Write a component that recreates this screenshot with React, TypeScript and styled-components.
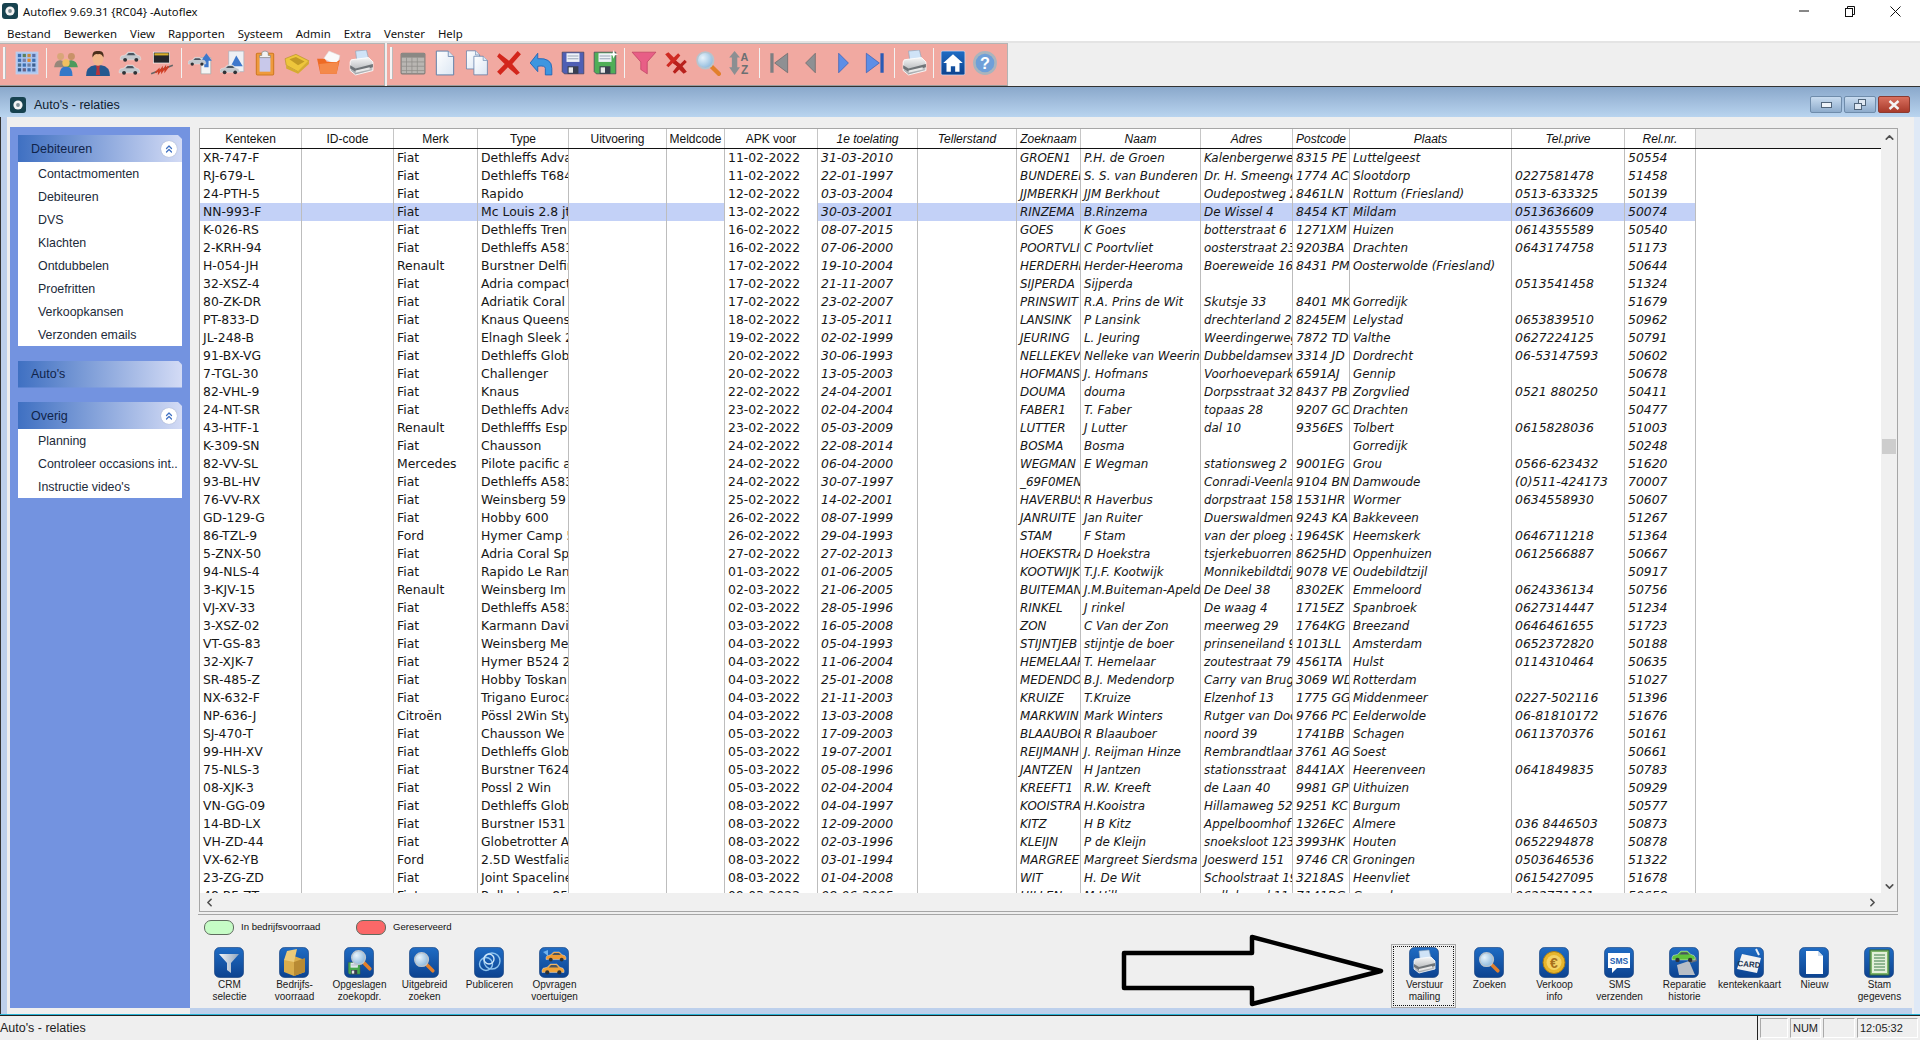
import React from 'react';
import styled, { createGlobalStyle } from 'styled-components';
import { ChevronUp, ChevronDown, ChevronLeft, ChevronRight, ChevronsUp } from 'lucide-react';

const GlobalStyle = createGlobalStyle`
  html, body { margin: 0; padding: 0; overflow: hidden; background: #efefef; }
  * { box-sizing: border-box; }
`;

const Page = styled.div`
  width: 1920px;
  height: 1040px;
  display: flex;
  flex-direction: column;
  overflow: hidden;
  font-family: "Liberation Sans", Arial, sans-serif;
  color: #111;
`;

const HiddenDefs = styled.svg`
  position: absolute;
  width: 0;
  height: 0;
`;

/* window chrome */
const TitleBar = styled.div`
  height: 22px;
  flex: none;
  background: #fff;
  display: flex;
  align-items: center;
  padding: 0 0 0 2px;
`;
const TitleText = styled.div`
  margin-left: 5px;
  font: 11.3px "Noto Sans", sans-serif;
  white-space: nowrap;
`;
const WinButtons = styled.div`
  margin-left: auto;
  margin-right: 2px;
  display: flex;
`;
const WinButton = styled.div`
  width: 45.5px;
  height: 20px;
  display: flex;
  align-items: center;
  justify-content: center;
`;
const MenuBar = styled.div`
  height: 19px;
  flex: none;
  background: #fff;
  display: flex;
  align-items: center;
  gap: 13px;
  padding: 3px 0 0 7px;
  font: 11.4px "Noto Sans", sans-serif;
`;
const ToolbarRow = styled.div`
  height: 46px;
  flex: none;
  display: flex;
  background: #efefef;
  border-top: 2px solid #e4e4e4;
  border-bottom: 1px solid #333;
`;
const ToolBand = styled.div<{ $w: number; $pad: number }>`
  width: ${p => p.$w}px;
  padding-left: ${p => p.$pad}px;
  padding-bottom: 4px;
  margin-right: 2px;
  height: 43px;
  display: flex;
  align-items: center;
  background: #f1a9a1;
  border-top: 1px solid #b4b4b4;
  border-bottom: 1px solid #9a9a9a;
  border-right: 1px solid #b4b4b4;
`;
const Grip = styled.div<{ $mr: number }>`
  width: 3px;
  height: 32px;
  margin-right: ${p => p.$mr}px;
  background: #f4f4f4;
  border-right: 1px solid #bbb;
`;
const ToolSep = styled.div`
  width: 1px;
  height: 30px;
  margin: 0 3px;
  background: #f2f2f2;
`;
const ToolBtn = styled.div`
  width: 32px;
  height: 32px;
  flex: none;
  display: flex;
  align-items: center;
  justify-content: center;
`;

/* mdi child */
const MdiTitle = styled.div`
  height: 30px;
  flex: none;
  display: flex;
  align-items: flex-end;
  padding: 0 10px 4px 10px;
  background: linear-gradient(#8aa8cb, #b9d4ef);
`;
const MdiTitleText = styled.div`
  margin: 0 0 0 8px;
  font-size: 12.5px;
  line-height: 15px;
  color: #10202e;
`;
const MdiButtons = styled.div`
  margin-left: auto;
  display: flex;
  gap: 2px;
`;
const MdiButton = styled.div<{ $close?: boolean }>`
  width: 32px;
  height: 17px;
  display: flex;
  align-items: center;
  justify-content: center;
  border: 1px solid ${p => (p.$close ? '#8c3a30' : '#6f8cab')};
  border-radius: 2px;
  background: ${p =>
    p.$close ? 'linear-gradient(#d9705f, #a83a2a)' : 'linear-gradient(#c9dcf0, #8eaccc)'};
`;
const Body = styled.div`
  flex: 1;
  min-height: 0;
  display: flex;
  background: #efefef;
`;
const LeftFrame = styled.div`
  width: 10px;
  flex: none;
  border-left: 1px solid #333;
  background: linear-gradient(90deg, #bdd0ec 70%, #efefef 70%);
`;
const RightFrame = styled.div`
  width: 8px;
  flex: none;
  background: linear-gradient(90deg, #efefef 20%, #dfe9f6 20%);
`;

/* sidebar */
const Sidebar = styled.div`
  width: 180px;
  flex: none;
  margin-top: 10px;
  margin-bottom: 6px;
  background: #7393e0;
  padding: 8px 8px 0;
  display: flex;
  flex-direction: column;
`;
const Group = styled.div`
  margin-bottom: 14.5px;
`;
const GroupHead = styled.div`
  height: 27px;
  display: flex;
  align-items: center;
  justify-content: space-between;
  padding: 0 5px 0 13px;
  font-size: 12.5px;
  color: #10244a;
  background: linear-gradient(90deg, #3f70c2, #d3dbf5);
  clip-path: polygon(0 0, calc(100% - 4px) 0, 100% 4px, 100% 100%, 0 100%);
`;
const Collapse = styled.div`
  width: 16px;
  height: 16px;
  border-radius: 50%;
  background: #fff;
  box-shadow: 0 0 1px #8593b0;
  display: flex;
  align-items: center;
  justify-content: center;
  color: #3f70c2;
`;
const GroupItem = styled.div`
  height: 23px;
  line-height: 25px;
  padding-left: 20px;
  background: #fff;
  font-size: 12.4px;
  color: #1c2a3a;
  white-space: nowrap;
  overflow: hidden;
`;

/* main */
const Main = styled.div`
  flex: 1;
  min-width: 0;
  display: flex;
  flex-direction: column;
  padding-left: 6px;
`;
const GridFrame = styled.div`
  width: 1699px;
  height: 784px;
  flex: none;
  margin: 11px 0 0 3px;
  border: 1px solid #a6a6a6;
  display: flex;
  background: #fff;
`;
const GridInner = styled.div`
  flex: 1;
  min-width: 0;
  display: flex;
  flex-direction: column;
`;
const HeadRow = styled.div`
  height: 20px;
  flex: none;
  display: flex;
  border-bottom: 1px solid #111;
`;
const HeadCell = styled.div<{ $w: number; $it?: boolean }>`
  width: ${p => p.$w}px;
  flex: none;
  text-align: center;
  font-size: 12px;
  line-height: 20px;
  font-style: ${p => (p.$it ? 'italic' : 'normal')};
  background: #fff;
  border-right: 1px solid #c6c6c6;
  white-space: nowrap;
  overflow: hidden;
`;
const HeadRest = styled.div`
  flex: 1;
  background: #efefef;
`;
const RowsArea = styled.div`
  flex: 1;
  min-height: 0;
  overflow: hidden;
`;
const Row = styled.div`
  height: 18px;
  display: flex;
`;
const Cell = styled.div<{ $w: number; $it?: boolean; $fs?: number; $hl?: boolean }>`
  width: ${p => p.$w}px;
  flex: none;
  padding-left: 3px;
  font-family: "DejaVu Sans", sans-serif;
  font-size: ${p => p.$fs ?? 12.4}px;
  line-height: 18px;
  font-style: ${p => (p.$it ? 'italic' : 'normal')};
  background: ${p => (p.$hl ? '#c3d1f7' : '#fff')};
  border-right: 1px solid #bdbdbd;
  white-space: nowrap;
  overflow: hidden;
  color: #161616;
`;
const HScroll = styled.div`
  height: 18px;
  flex: none;
  background: #f0f0f0;
  display: flex;
  align-items: center;
  justify-content: space-between;
  padding: 0 2px 0 3px;
  color: #505050;
`;
const VScroll = styled.div`
  width: 16px;
  flex: none;
  padding: 2px 0 0;
  background: #f0f0f0;
  display: flex;
  flex-direction: column;
  align-items: center;
  color: #505050;
`;
const VThumb = styled.div`
  width: 14px;
  height: 15px;
  margin-top: 295px;
  background: #cdcdcd;
`;
const VDown = styled.div`
  margin-top: auto;
  padding-bottom: 18px;
  display: flex;
`;
const BottomLine = styled.div`
  width: 1700px;
  flex: none;
  margin: 2px 0 0 2px;
  border-top: 1px solid #a6a6a6;
`;
const Legend = styled.div`
  height: 29px;
  flex: none;
  display: flex;
  align-items: flex-start;
  padding: 5px 0 0 8px;
`;
const LegendPill = styled.div<{ $c: string }>`
  width: 30px;
  height: 15px;
  flex: none;
  border: 1px solid #5f6b5f;
  border-radius: 7px;
  background: ${p => p.$c};
`;
const LegendText = styled.div<{ $mr?: number }>`
  width: ${p => p.$mr ?? 'auto'}px;
  margin-left: 7px;
  font-size: 9.6px;
  line-height: 14px;
  white-space: nowrap;
`;
const ActionRow = styled.div`
  position: relative;
  height: 64px;
  flex: none;
  margin-right: 1px;
  display: flex;
  justify-content: space-between;
`;
const ActionGroup = styled.div`
  display: flex;
`;
const ActionBtn = styled.div<{ $focus?: boolean }>`
  width: 65px;
  height: 64px;
  display: flex;
  flex-direction: column;
  align-items: center;
  padding-top: 2px;
  font-size: 10px;
  line-height: 12px;
  text-align: center;
  color: #1a1a1a;
  border: 1px solid ${p => (p.$focus ? '#a8a8a8' : 'transparent')};
  outline: ${p => (p.$focus ? '1px dotted #111' : 'none')};
  outline-offset: -3px;
`;
const ActionLabel = styled.div`
  margin-top: 1px;
  padding-left: 2px;
  white-space: pre-line;
`;
const CalloutArrow = styled.svg`
  position: absolute;
  right: 525px;
  top: -10px;
`;
const BottomBand = styled.div`
  height: 6px;
  flex: none;
  margin-left: -6px;
  background: #bdd0ec;
`;
const WindowEdge = styled.div`
  height: 2px;
  flex: none;
  background: #2ab4d6;
  border-bottom: 1px solid #222;
`;
const StatusBar = styled.div`
  height: 24px;
  flex: none;
  display: flex;
  align-items: center;
  background: #efefef;
  font-size: 12.5px;
  color: #222;
`;
const StatusPanels = styled.div`
  margin-left: auto;
  align-self: stretch;
  display: flex;
  align-items: center;
  gap: 2px;
  padding: 0 2px;
  border-left: 1px solid #222;
`;
const StatusPanel = styled.div<{ $w: number; $left?: boolean }>`
  width: ${p => p.$w}px;
  height: 20px;
  line-height: 18px;
  padding-left: ${p => (p.$left ? 2 : 0)}px;
  text-align: ${p => (p.$left ? 'left' : 'center')};
  border: 1px solid;
  border-color: #a9a9a9 #fff #fff #a9a9a9;
  font-size: 11px;
`;

/* drawings */
const Svg = ({ children, w = 26, h = 26 }: { children: React.ReactNode; w?: number; h?: number }) => (
  <svg width={w} height={h} viewBox="0 0 24 24">{children}</svg>
);

const AppLogo = () => (
  <svg width="16" height="16" viewBox="0 0 16 16">
    <rect width="16" height="16" rx="3" fill="#17424f" />
    <circle cx="8" cy="8" r="4.6" fill="#f4f4f4" />
    <circle cx="8" cy="8" r="1.9" fill="#7d8f96" />
  </svg>
);

const CarShape = ({ x = 0, y = 0, s = 1, c = '#c3c8cd' }: { x?: number; y?: number; s?: number; c?: string }) => (
  <g transform={`translate(${x} ${y}) scale(${s})`}>
    <path d="M0 7 L1 5 L5 4 L8 1 H14 L17 4 L20 5 L21 7 V9 H0Z" fill={c} stroke="#f4f4f4" strokeWidth=".4" />
    <path d="M6.5 4.2 L8.6 2 H13.6 L15.6 4.2Z" fill="#4a5560" />
    <circle cx="5" cy="9" r="2" fill="#2e3236" />
    <circle cx="16.5" cy="9" r="2" fill="#2e3236" />
  </g>
);

const Printer = () => (
  <>
    <path d="M7 1 L17 0 L19 8 L8 9Z" fill="#cfe3f7" stroke="#8fa3b6" strokeWidth=".6" />
    <path d="M3 9 L19 7 L23 11 V19 L7 23 L2 19 V11Z" fill="url(#grey)" stroke="#fff" strokeWidth=".8" />
    <path d="M2 14 L7 17 L23 13 V16 L7 20 L2 17Z" fill="#6f7478" />
    <path d="M7 19 L20 16 V18 L7 21Z" fill="#e8e8e8" />
  </>
);

const Magnifier = () => (
  <>
    <path d="M14 14 L22 22" stroke="#e2802c" strokeWidth="4" strokeLinecap="round" />
    <circle cx="9.5" cy="9.5" r="7.6" fill="url(#lens)" stroke="#b9c3cc" strokeWidth="1.6" />
  </>
);

const Floppy = ({ c }: { c: string }) => (
  <>
    <path d="M2 2 H22 V22 H4 L2 20Z" fill={c} stroke="#333a55" strokeWidth=".6" />
    <rect x="6" y="3" width="12" height="8" fill="#eef2f8" />
    <path d="M7 5.5 H17 M7 8 H17" stroke="#9aa6b8" />
    <rect x="7" y="15" width="10" height="7" fill="#3a3f50" />
    <rect x="8" y="16" width="4" height="5" fill="#e9e9e9" />
  </>
);

const Doc = ({ x = 0 }: { x?: number }) => (
  <g transform={`translate(${x} 0)`}>
    <path d="M4 1 H15 L20 6 V23 H4Z" fill="url(#paper)" stroke="#5f7ea8" strokeWidth=".9" />
    <path d="M15 1 V6 H20" fill="#dfe8f3" stroke="#5f7ea8" strokeWidth=".7" />
  </g>
);

const gridColors = ['#3d6fb0', '#5f7f5a', '#c98a3a', '#5a6fa5', '#3d6fb0', '#7a7fa5', '#e08a30', '#3d6fb0', '#4e6f8a', '#3d6fb0', '#6f7fa0', '#3d5f90', '#345a8a', '#6a5f80', '#3d6fb0', '#506a9a'];

const toolIcons: React.ReactNode[] = [
  <Svg><rect x="2" y="2" width="20" height="20" fill="#a9c6f2" stroke="#bcd0ee" />{gridColors.map((c, i) => <rect key={i} x={3.6 + (i % 4) * 4.4} y={3.6 + Math.floor(i / 4) * 4.4} width="3" height="3" fill={c} />)}</Svg>,
  <Svg>
    <circle cx="7" cy="6" r="3.2" fill="#d9a679" /><path d="M1 16 Q2 9 7 9.5 Q12 10 12 16Z" fill="#97877a" />
    <circle cx="17" cy="6" r="3.2" fill="#c99268" /><path d="M12 16 Q13 9 17 9.5 Q22 10 23 16Z" fill="#4d9a5c" />
    <circle cx="12" cy="12" r="3.4" fill="#f0c060" /><path d="M6 24 Q6 15 12 15.5 Q18 15 18 24Z" fill="#3478c8" />
  </Svg>,
  <Svg>
    <path d="M1 24 Q1 15 9 14 H15 Q23 15 23 24Z" fill="#24588f" />
    <path d="M10 14 H14 L13.2 17 L14 23 H10 L10.8 17Z" fill="#b8343a" />
    <ellipse cx="12" cy="8" rx="5" ry="6.6" fill="#f2b78c" />
    <path d="M7 7 Q6 0 12 1 Q18 0 17 7 Q15 3 12 4 Q9 3 7 7Z" fill="#4c2f1c" />
  </Svg>,
  <Svg><CarShape x={3} y={1} s={.9} /><CarShape x={2} y={13} s={.9} /></Svg>,
  <Svg>
    <rect x="4" y="2" width="15" height="10" fill="#24262a" stroke="#fff" strokeWidth=".6" /><rect x="5" y="3" width="13" height="2" fill="#d8b02c" />
    <path d="M2 22 L22 14" stroke="#666" strokeWidth="1.5" />
    <path d="M6 21 L9 18 L9 21 L12 17 L12 20 L15 16 L15 19 L18 15" stroke="#cf3b22" strokeWidth="1.6" fill="none" />
  </Svg>,
  <Svg><path d="M12 7 H21 V22 H12Z" fill="#f4f4f4" stroke="#9aa" strokeWidth=".6" /><path d="M17 3 L22 10 H19 V16 H15 V10 H12Z" fill="#3e78cc" /><CarShape x={0} y={6} s={.78} /></Svg>,
  <Svg><path d="M8 1 H22 V20 H8Z" fill="#eef0f4" stroke="#a5adb8" strokeWidth=".6" /><path d="M15 5 L21 15 H10Z" fill="#3e78cc" /><CarShape x={0} y={13} s={.85} /></Svg>,
  <Svg><rect x="4" y="3" width="16" height="20" rx="1" fill="#ef9a3c" stroke="#d07a22" /><rect x="7" y="6" width="10" height="14" fill="#c8c8ea" /><path d="M9 5 V3 Q9 1 12 1 Q15 1 15 3 V5 H17 V7 H7 V5Z" fill="#f2f2f2" stroke="#7a7a7a" strokeWidth=".6" /></Svg>,
  <Svg><path d="M1 8 L11 4 L23 10 L13 20 L2 14Z" fill="#eec63c" stroke="#b3902a" strokeWidth=".6" /><path d="M5 8.5 L11 6.5 L19 10.5 L13 14 Z" fill="#c29a26" /><path d="M2 14 L13 20 L23 10 V13 L13 22 L2 17Z" fill="#d5ac2f" /></Svg>,
  <Svg><path d="M7 8 L12 1 L22 5 L20 14 Z" fill="#fafafa" stroke="#ddd" strokeWidth=".5" /><path d="M1 8 H8 L10 11 H19 L22 9 L19 22 H4Z" fill="#ee6a24" /><path d="M3 13 L21 11 L19 22 H4Z" fill="#f4894a" /></Svg>,
  <Svg><Printer /></Svg>,
  <Svg><rect x="1" y="3" width="22" height="19" rx="1" fill="#b9b6b2" stroke="#7e7c78" /><rect x="1" y="3" width="22" height="4" fill="#8a8884" /><path d="M1 11 H23 M1 15 H23 M1 19 H23 M6 7 V22 M11 7 V22 M16 7 V22" stroke="#8f8d89" strokeWidth=".7" /></Svg>,
  <Svg><Doc /></Svg>,
  <Svg><g transform="scale(.76)"><Doc x={-1} /></g><g transform="translate(6 5) scale(.78)"><Doc /></g></Svg>,
  <Svg><path d="M3 3 L12 10 L20 1 L23 4 L15 13 L22 21 L19 23 L11 16 L4 23 L1 20 L8 13 L1 6Z" fill="#d3261c" /></Svg>,
  <Svg><path d="M2 12 L9 3 V8 Q22 7 22 17 V23 H16 V17 Q16 14 9 15 V20Z" fill="#3e96e0" stroke="#1f63b5" strokeWidth=".8" /></Svg>,
  <Svg><Floppy c="#4f5fb4" /></Svg>,
  <Svg><Floppy c="#4fae58" /><path d="M20 0 L21 3 L24 4 L21 5 L20 8 L19 5 L16 4 L19 3Z" fill="#fff" /></Svg>,
  <Svg><path d="M1 2 H23 L15 11 V22 L9 18 V11Z" fill="#e85e86" stroke="#b83a5c" strokeWidth=".6" /></Svg>,
  <Svg><path d="M2 4 L5 2 L10 7 L14 3 L16 5 L12 10 L15 13 L13 15 L9 12 L5 16 L3 14 L7 10Z" fill="#cf2a22" /><path d="M9 12 L12 10 L16 13 L20 9 L22 11 L18 15 L22 20 L19 22 L15 18 L11 22 L9 20 L13 15Z" fill="#b8211c" /></Svg>,
  <Svg><Magnifier /></Svg>,
  <Svg><path d="M7 1 L12 7 H9.5 V16 H12 L7 23 L2 16 H4.5 V7 H2Z" fill="#8c8f92" /><text x="12.5" y="10" fontFamily="Liberation Sans" fontSize="10" fontWeight="700" fill="#6c6f72">A</text><text x="13" y="22" fontFamily="Liberation Sans" fontSize="11" fontWeight="700" fill="#6c6f72">Z</text></Svg>,
  <Svg><rect x="4" y="3" width="3" height="18" fill="#7d7f82" /><path d="M20 3 V21 L8 12Z" fill="#8e9093" stroke="#5f6163" strokeWidth=".6" /></Svg>,
  <Svg><path d="M16 3 V21 L7 12Z" fill="#8e9093" stroke="#5f6163" strokeWidth=".6" /></Svg>,
  <Svg><path d="M8 3 V21 L17 12Z" fill="#5d8ee6" stroke="#2b5ab5" strokeWidth=".6" /></Svg>,
  <Svg><path d="M4 3 V21 L16 12Z" fill="#5d8ee6" stroke="#2b5ab5" strokeWidth=".6" /><rect x="17" y="3" width="3" height="18" fill="#2b5ab5" /></Svg>,
  <Svg><Printer /></Svg>,
  <Svg><rect x="1" y="1" width="22" height="22" rx="1.5" fill="url(#tile)" stroke="#cfdff5" strokeWidth=".6" /><path d="M12 4 L21 12 H18 V20 H14 V15 H10 V20 H6 V12 H3Z" fill="#fff" /></Svg>,
  <Svg><circle cx="12" cy="12" r="11" fill="#a9b4bd" /><circle cx="12" cy="12" r="8.6" fill="#6f9fd8" /><text x="12" y="17.5" textAnchor="middle" fontFamily="Liberation Sans" fontSize="15" fontWeight="700" fill="#fff">?</text></Svg>,
];

const Tile = ({ children }: { children?: React.ReactNode }) => (
  <svg width="30" height="31" viewBox="0 0 30 31">
    <rect x=".5" y=".5" width="29" height="30" rx="5" fill="url(#tile)" stroke="#0d3b7a" strokeWidth=".6" />
    {children}
  </svg>
);

const MiniGlass = ({ x = 6, y = 5 }: { x?: number; y?: number }) => (
  <g transform={`translate(${x} ${y}) scale(.9)`}><Magnifier /></g>
);

/* content */
const toolBandOne: (number | 'sep')[] = [0, 'sep', 1, 2, 3, 4, 'sep', 5, 6, 7, 8, 9, 10];
const toolBandTwo: (number | 'sep')[] = [11, 12, 13, 14, 15, 16, 17, 'sep', 18, 19, 20, 21, 'sep', 22, 23, 24, 25, 'sep', 26, 'sep', 27, 28];

const menuItems = ['Bestand', 'Bewerken', 'View', 'Rapporten', 'Systeem', 'Admin', 'Extra', 'Venster', 'Help'];

const NARROW = 11.9;

const columns: { name: string; w: number; it?: boolean; fs?: number }[] = [
  { name: 'Kenteken', w: 102 },
  { name: 'ID-code', w: 92 },
  { name: 'Merk', w: 84 },
  { name: 'Type', w: 91 },
  { name: 'Uitvoering', w: 98 },
  { name: 'Meldcode', w: 58 },
  { name: 'APK voor', w: 93 },
  { name: '1e toelating', w: 100, it: true },
  { name: 'Tellerstand', w: 99, it: true },
  { name: 'Zoeknaam', w: 64, it: true, fs: NARROW },
  { name: 'Naam', w: 120, it: true, fs: NARROW },
  { name: 'Adres', w: 92, it: true, fs: NARROW },
  { name: 'Postcode', w: 57, it: true },
  { name: 'Plaats', w: 162, it: true, fs: NARROW },
  { name: 'Tel.prive', w: 113, it: true },
  { name: 'Rel.nr.', w: 71, it: true },
];

// kenteken|merk|type|apk|toelating|zoeknaam|naam|adres|postcode|plaats|tel|relnr
const rawRows = `XR-747-F|Fiat|Dethleffs Adva|11-02-2022|31-03-2010|GROEN1|P.H. de Groen|Kalenbergerweg|8315 PE|Luttelgeest||50554
RJ-679-L|Fiat|Dethleffs T684|11-02-2022|22-01-1997|BUNDEREN|S. S. van Bunderen|Dr. H. Smeenge|1774 AC|Slootdorp|0227581478|51458
24-PTH-5|Fiat|Rapido|12-02-2022|03-03-2004|JJMBERKH|JJM Berkhout|Oudepostweg 2|8461LN|Rottum (Friesland)|0513-633325|50139
NN-993-F|Fiat|Mc Louis 2.8 jt|13-02-2022|30-03-2001|RINZEMA|B.Rinzema|De Wissel 4|8454 KT|Mildam|0513636609|50074
K-026-RS|Fiat|Dethleffs Tren|16-02-2022|08-07-2015|GOES|K Goes|botterstraat 6|1271XM|Huizen|0614355589|50540
2-KRH-94|Fiat|Dethleffs A581|16-02-2022|07-06-2000|POORTVLI|C Poortvliet|oosterstraat 23|9203BA|Drachten|0643174758|51173
H-054-JH|Renault|Burstner Delfin|17-02-2022|19-10-2004|HERDERHE|Herder-Heeroma|Boereweide 16|8431 PM|Oosterwolde (Friesland)||50644
32-XSZ-4|Fiat|Adria compact|17-02-2022|21-11-2007|SIJPERDA|Sijperda||||0513541458|51324
80-ZK-DR|Fiat|Adriatik Coral|17-02-2022|23-02-2007|PRINSWIT|R.A. Prins de Wit|Skutsje 33|8401 MK|Gorredijk||51679
PT-833-D|Fiat|Knaus Queens|18-02-2022|13-05-2011|LANSINK|P Lansink|drechterland 2|8245EM|Lelystad|0653839510|50962
JL-248-B|Fiat|Elnagh Sleek 2|19-02-2022|02-02-1999|JEURING|L. Jeuring|Weerdingerweg|7872 TD|Valthe|0627224125|50791
91-BX-VG|Fiat|Dethleffs Glob|20-02-2022|30-06-1993|NELLEKEV|Nelleke van Weering|Dubbeldamsew|3314 JD|Dordrecht|06-53147593|50602
7-TGL-30|Fiat|Challenger|20-02-2022|13-05-2003|HOFMANS|J. Hofmans|Voorhoevepark|6591AJ|Gennip||50678
82-VHL-9|Fiat|Knaus|22-02-2022|24-04-2001|DOUMA|douma|Dorpsstraat 32|8437 PB|Zorgvlied|0521 880250|50411
24-NT-SR|Fiat|Dethleffs Adva|23-02-2022|02-04-2004|FABER1|T. Faber|topaas 28|9207 GC|Drachten||50477
43-HTF-1|Renault|Dethlefffs Esp|23-02-2022|05-03-2009|LUTTER|J Lutter|dal 10|9356ES|Tolbert|0615828036|51003
K-309-SN|Fiat|Chausson|24-02-2022|22-08-2014|BOSMA|Bosma|||Gorredijk||50248
82-VV-SL|Mercedes|Pilote pacific a|24-02-2022|06-04-2000|WEGMAN|E Wegman|stationsweg 2|9001EG|Grou|0566-623432|51620
93-BL-HV|Fiat|Dethleffs A583|24-02-2022|30-07-1997|_69F0MEN||Conradi-Veenla|9104 BN|Damwoude|(0)511-424173|70007
76-VV-RX|Fiat|Weinsberg 59|25-02-2022|14-02-2001|HAVERBUS|R Haverbus|dorpstraat 158|1531HR|Wormer|0634558930|50607
GD-129-G|Fiat|Hobby 600|26-02-2022|08-07-1999|JANRUITE|Jan Ruiter|Duerswaldmen|9243 KA|Bakkeveen||51267
86-TZL-9|Ford|Hymer Camp 5|26-02-2022|29-04-1993|STAM|F Stam|van der ploeg s|1964SK|Heemskerk|0646711218|51364
5-ZNX-50|Fiat|Adria Coral Sp|27-02-2022|27-02-2013|HOEKSTRA|D Hoekstra|tsjerkebuorren|8625HD|Oppenhuizen|0612566887|50667
94-NLS-4|Fiat|Rapido Le Ran|01-03-2022|01-06-2005|KOOTWIJK|T.J.F. Kootwijk|Monnikebildtdij|9078 VE|Oudebildtzijl||50917
3-KJV-15|Renault|Weinsberg Im|02-03-2022|21-06-2005|BUITEMAN|J.M.Buiteman-Apeld|De Deel 38|8302EK|Emmeloord|0624336134|50756
VJ-XV-33|Fiat|Dethleffs A583|02-03-2022|28-05-1996|RINKEL|J rinkel|De waag 4|1715EZ|Spanbroek|0627314447|51234
3-XSZ-02|Fiat|Karmann Davi|03-03-2022|16-05-2008|ZON|C Van der Zon|meerweg 29|1764KG|Breezand|0646461655|51723
VT-GS-83|Fiat|Weinsberg Me|04-03-2022|05-04-1993|STIJNTJEB|stijntje de boer|prinseneiland 9|1013LL|Amsterdam|0652372820|50188
32-XJK-7|Fiat|Hymer B524 2|04-03-2022|11-06-2004|HEMELAAR|T. Hemelaar|zoutestraat 79|4561TA|Hulst|0114310464|50635
SR-485-Z|Fiat|Hobby Toskan|04-03-2022|25-01-2008|MEDENDO|B.J. Medendorp|Carry van Brug|3069 WD|Rotterdam||51027
NX-632-F|Fiat|Trigano Euroca|04-03-2022|21-11-2003|KRUIZE|T.Kruize|Elzenhof 13|1775 GG|Middenmeer|0227-502116|51396
NP-636-J|Citroën|Pössl 2Win Sty|04-03-2022|13-03-2008|MARKWIN|Mark Winters|Rutger van Doo|9766 PC|Eelderwolde|06-81810172|51676
SJ-470-T|Fiat|Chausson We|05-03-2022|17-09-2003|BLAAUBOE|R Blaauboer|noord 39|1741BB|Schagen|0611370376|50161
99-HH-XV|Fiat|Dethleffs Glob|05-03-2022|19-07-2001|REIJMANH|J. Reijman Hinze|Rembrandtlaan|3761 AG|Soest||50661
75-NLS-3|Fiat|Burstner T624|05-03-2022|05-08-1996|JANTZEN|H Jantzen|stationsstraat|8441AX|Heerenveen|0641849835|50783
08-XJK-3|Fiat|Possl 2 Win|05-03-2022|02-04-2004|KREEFT1|R.W. Kreeft|de Laan 40|9981 GP|Uithuizen||50929
VN-GG-09|Fiat|Dethleffs Glob|08-03-2022|04-04-1997|KOOISTRA|H.Kooistra|Hillamaweg 52|9251 KC|Burgum||50577
14-BD-LX|Fiat|Burstner I531|08-03-2022|12-09-2000|KITZ|H B Kitz|Appelboomhof 1|1326EC|Almere|036 8446503|50873
VH-ZD-44|Fiat|Globetrotter A|08-03-2022|02-03-1996|KLEIJN|P de Kleijn|snoeksloot 123|3993HK|Houten|0652294878|50878
VX-62-YB|Ford|2.5D Westfalia|08-03-2022|03-01-1994|MARGREET|Margreet Sierdsma|Joeswerd 151|9746 CR|Groningen|0503646536|51322
23-ZG-ZD|Fiat|Joint Spaceline|08-03-2022|01-04-2008|WIT|H. De Wit|Schoolstraat 19|3218AS|Heenvliet|0615427095|51678
48-BF-ZT|Fiat|Rollerteam 85|09-03-2022|08-06-2005|HILLEN|M Hillen|wollebrand 11|7141BG|Groenlo|0622771101|50658`;

const rows = rawRows.split('\n').map(line => {
  const [kent, merk, type, apk, toel, zoek, naam, adres, post, plaats, tel, rel] = line.split('|');
  return [kent, '', merk, type, '', '', apk, toel, '', zoek, naam, adres, post, plaats, tel, rel];
});

const SELECTED_ROW = 3;
const APK_COLUMN = 6;

const leftActions: { label: string; icon: React.ReactNode }[] = [
  { label: 'CRM\nselectie', icon: <Tile><path d="M5 7 H25 L17 16 V26 L13 23 V16Z" fill="url(#silver)" /></Tile> },
  { label: 'Bedrijfs-\nvoorraad', icon: <Tile><path d="M5 13 L15 9 L26 13 V25 L15 29 L5 25Z" fill="#d9ad4d" /><path d="M15 15 L26 11 V25 L15 29Z" fill="#b88a33" /><path d="M5 13 L8 4 L18 2 L15 15Z" fill="#eccb79" /></Tile> },
  { label: 'Opgeslagen\nzoekopdr.', icon: <Tile><g transform="translate(3 14) scale(.6)"><Floppy c="#46a64e" /></g><MiniGlass x={6} y={2} /></Tile> },
  { label: 'Uitgebreid\nzoeken', icon: <Tile><MiniGlass x={4} y={4} /></Tile> },
  { label: 'Publiceren', icon: <Tile><g fill="none" stroke="#8fc4ee" strokeWidth="1.4"><circle cx="12" cy="17" r="6.5" /><circle cx="18" cy="14" r="8" /><circle cx="15" cy="12" r="5" stroke="#cfe6f8" /></g></Tile> },
  { label: 'Opvragen\nvoertuigen', icon: <Tile><CarShape x={7} y={4} s={.95} c="#ee9a34" /><CarShape x={3} y={16} s={1.05} c="#f0a43a" /><path d="M4 5 L9 3 V9Z" fill="#6fb2ee" /></Tile> },
];

const rightActions: { label: string; icon: React.ReactNode; focus?: boolean }[] = [
  { label: 'Verstuur\nmailing', focus: true, icon: <Tile><g transform="translate(3 3)"><Printer /></g></Tile> },
  { label: 'Zoeken', icon: <Tile><MiniGlass x={4} y={4} /></Tile> },
  { label: 'Verkoop\ninfo', icon: <Tile><circle cx="15" cy="15.5" r="11" fill="#e7b52d" stroke="#a87d14" /><circle cx="15" cy="15.5" r="7.5" fill="#f5d365" /><text x="15" y="21" textAnchor="middle" fontFamily="Liberation Sans" fontSize="14" fontWeight="700" fill="#a8701c">€</text></Tile> },
  { label: 'SMS\nverzenden', icon: <Tile><path d="M4 6 H26 V21 H13 L8 26 V21 H4Z" fill="#fff" /><text x="15" y="17" textAnchor="middle" fontFamily="Liberation Sans" fontSize="8.5" fontWeight="700" fill="#1c5fb2">SMS</text></Tile> },
  { label: 'Reparatie\nhistorie', icon: <Tile><path d="M8 18 L20 14 L26 28 H10Z" fill="#b8bec6" /><path d="M20 12 L27 10 L28 14 L22 16Z" fill="#6a7078" /><CarShape x={3} y={3} s={1.1} c="#5fc23c" /></Tile> },
  { label: 'kentekenkaart', icon: <Tile><path d="M8 7 L27 11 L23 26 L3 22Z" fill="#f2f2f2" /><path d="M22 2 L25 8" stroke="#e8eef6" strokeWidth="2" /><text x="15" y="20" textAnchor="middle" fontFamily="Liberation Sans" fontSize="8" fontWeight="700" fill="#1b3350" transform="rotate(5 15 18)">CARD</text></Tile> },
  { label: 'Nieuw', icon: <Tile><path d="M7 4 H19 L24 9 V27 H7Z" fill="#fff" /><path d="M19 4 V9 H24Z" fill="#cfdff2" /></Tile> },
  { label: 'Stam\ngegevens', icon: <Tile><rect x="6" y="3" width="19" height="25" fill="#7fb56a" stroke="#35683a" /><rect x="8" y="5" width="15" height="21" fill="#e3f0da" /><path d="M10 8 H21 M10 11 H21 M10 14 H21 M10 17 H21 M10 20 H21 M10 23 H21" stroke="#3e7d4a" strokeWidth="1.2" /></Tile> },
];

const renderBand = (items: (number | 'sep')[]) =>
  items.map((it, i) =>
    it === 'sep' ? <ToolSep key={i} /> : <ToolBtn key={i}>{toolIcons[it]}</ToolBtn>
  );

export default function App() {
  return (
    <Page>
      <GlobalStyle />
      <HiddenDefs>
        <defs>
          <linearGradient id="tile" x1="0" y1="0" x2="0" y2="1">
            <stop offset="0" stopColor="#1f6cc4" />
            <stop offset="1" stopColor="#0c428f" />
          </linearGradient>
          <linearGradient id="silver" x1="0" y1="0" x2="1" y2="0">
            <stop offset="0" stopColor="#f4f6f8" />
            <stop offset="1" stopColor="#8ea4bc" />
          </linearGradient>
          <linearGradient id="grey" x1="0" y1="0" x2="0" y2="1">
            <stop offset="0" stopColor="#f6f6f6" />
            <stop offset="1" stopColor="#9ea2a6" />
          </linearGradient>
          <linearGradient id="paper" x1="0" y1="0" x2="1" y2="1">
            <stop offset="0" stopColor="#ffffff" />
            <stop offset="1" stopColor="#dbe6f3" />
          </linearGradient>
          <radialGradient id="lens" cx=".35" cy=".35" r=".8">
            <stop offset="0" stopColor="#e8f3fb" />
            <stop offset="1" stopColor="#7fb0d8" />
          </radialGradient>
        </defs>
      </HiddenDefs>

      <TitleBar>
        <AppLogo />
        <TitleText>Autoflex 9.69.31 {'{RC04}'} -Autoflex</TitleText>
        <WinButtons>
          <WinButton>
            <svg width="10" height="10" viewBox="0 0 10 10"><path d="M0 5 H10" stroke="#111" /></svg>
          </WinButton>
          <WinButton>
            <svg width="10" height="11" viewBox="0 0 10 11" fill="none" stroke="#111"><rect x=".5" y="2.5" width="7" height="8" /><path d="M2.5 2.5 V.5 H9.5 V8.5 H7.5" /></svg>
          </WinButton>
          <WinButton>
            <svg width="11" height="11" viewBox="0 0 11 11"><path d="M.5 .5 L10.5 10.5 M10.5 .5 L.5 10.5" stroke="#111" /></svg>
          </WinButton>
        </WinButtons>
      </TitleBar>
      <MenuBar>
        {menuItems.map(m => <div key={m}>{m}</div>)}
      </MenuBar>
      <ToolbarRow>
        <ToolBand $w={385} $pad={3}>
          <Grip $mr={5} />
          {renderBand(toolBandOne)}
        </ToolBand>
        <ToolBand $w={621} $pad={3}>
          <Grip $mr={4} />
          {renderBand(toolBandTwo)}
        </ToolBand>
      </ToolbarRow>

      <MdiTitle>
        <AppLogo />
        <MdiTitleText>Auto's - relaties</MdiTitleText>
        <MdiButtons>
          <MdiButton><svg width="11" height="6" viewBox="0 0 11 6"><rect x=".5" y=".5" width="10" height="5" fill="#eef3f9" stroke="#51657a" /></svg></MdiButton>
          <MdiButton><svg width="12" height="11" viewBox="0 0 12 11" fill="#dfe8f2" stroke="#51657a"><rect x="4.5" y=".5" width="7" height="6" /><rect x=".5" y="4.5" width="7" height="6" /></svg></MdiButton>
          <MdiButton $close><svg width="12" height="10" viewBox="0 0 12 10"><path d="M1.5 1 L10.5 9 M10.5 1 L1.5 9" stroke="#f4f4f4" strokeWidth="2.4" /></svg></MdiButton>
        </MdiButtons>
      </MdiTitle>

      <Body>
        <LeftFrame />
        <Sidebar>
          <Group>
            <GroupHead>Debiteuren<Collapse><ChevronsUp size={12} strokeWidth={2.5} /></Collapse></GroupHead>
            {['Contactmomenten', 'Debiteuren', 'DVS', 'Klachten', 'Ontdubbelen', 'Proefritten', 'Verkoopkansen', 'Verzonden emails'].map(t => (
              <GroupItem key={t}>{t}</GroupItem>
            ))}
          </Group>
          <Group>
            <GroupHead>Auto's</GroupHead>
          </Group>
          <Group>
            <GroupHead>Overig<Collapse><ChevronsUp size={12} strokeWidth={2.5} /></Collapse></GroupHead>
            {['Planning', 'Controleer occasions int..', "Instructie video's"].map(t => (
              <GroupItem key={t}>{t}</GroupItem>
            ))}
          </Group>
        </Sidebar>

        <Main>
          <GridFrame>
            <GridInner>
              <HeadRow>
                {columns.map(c => <HeadCell key={c.name} $w={c.w} $it={c.it}>{c.name}</HeadCell>)}
                <HeadRest />
              </HeadRow>
              <RowsArea>
                {rows.map((r, i) => (
                  <Row key={i}>
                    {r.map((v, j) => (
                      <Cell key={j} $w={columns[j].w} $it={columns[j].it} $fs={columns[j].fs} $hl={i === SELECTED_ROW && j !== APK_COLUMN}>{v}</Cell>
                    ))}
                  </Row>
                ))}
              </RowsArea>
              <HScroll>
                <ChevronLeft size={13} strokeWidth={3} />
                <ChevronRight size={13} strokeWidth={3} />
              </HScroll>
            </GridInner>
            <VScroll>
              <ChevronUp size={13} strokeWidth={3} />
              <VThumb />
              <VDown><ChevronDown size={13} strokeWidth={3} /></VDown>
            </VScroll>
          </GridFrame>
          <BottomLine />
          <Legend>
            <LegendPill $c="#c6fcc6" />
            <LegendText $mr={115}>In bedrijfsvoorraad</LegendText>
            <LegendPill $c="#fb6868" />
            <LegendText>Gereserveerd</LegendText>
          </Legend>
          <ActionRow>
            <ActionGroup>
              {leftActions.map(a => (
                <ActionBtn key={a.label}>{a.icon}<ActionLabel>{a.label}</ActionLabel></ActionBtn>
              ))}
            </ActionGroup>
            <ActionGroup>
              {rightActions.map(a => (
                <ActionBtn key={a.label} $focus={a.focus}>{a.icon}<ActionLabel>{a.label}</ActionLabel></ActionBtn>
              ))}
            </ActionGroup>
            <CalloutArrow width="266" height="74" viewBox="0 0 266 74">
              <path d="M4 19 H132 V3 L261 37 L132 70 V54 H4Z" fill="none" stroke="#000" strokeWidth="4.5" strokeLinejoin="round" />
            </CalloutArrow>
          </ActionRow>
          <BottomBand />
        </Main>
        <RightFrame />
      </Body>
      <WindowEdge />
      <StatusBar>
        Auto's - relaties
        <StatusPanels>
          <StatusPanel $w={28} />
          <StatusPanel $w={31}>NUM</StatusPanel>
          <StatusPanel $w={32} />
          <StatusPanel $w={61} $left>12:05:32</StatusPanel>
        </StatusPanels>
      </StatusBar>
    </Page>
  );
}
